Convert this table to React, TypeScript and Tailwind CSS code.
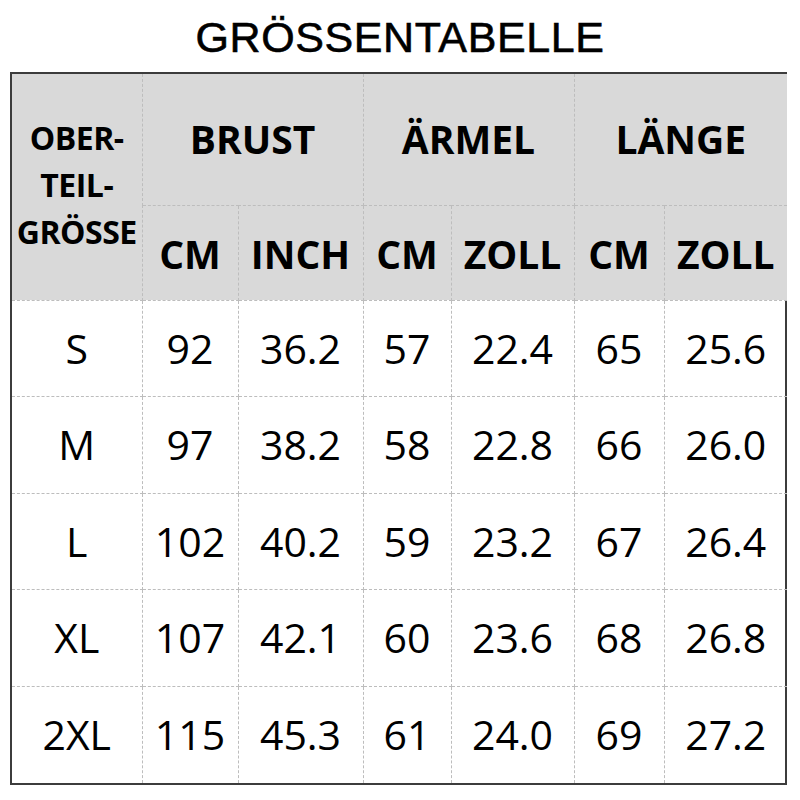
const rows = [
  ['S', '92', '36.2', '57', '22.4', '65', '25.6'],
  ['M', '97', '38.2', '58', '22.8', '66', '26.0'],
  ['L', '102', '40.2', '59', '23.2', '67', '26.4'],
  ['XL', '107', '42.1', '60', '23.6', '68', '26.8'],
  ['2XL', '115', '45.3', '61', '24.0', '69', '27.2'],
];

const widths = [130, 96, 125, 88, 123, 90, 123];

export default function App() {
  const cell = 'border border-dashed border-[#bdbdbd] text-center align-middle p-0';
  return (
    <div className="w-[800px] h-[800px] bg-white text-black">
      <h1 className="h-[72px] flex items-center justify-center text-[43px] font-['Liberation_Sans',Arial,sans-serif] tracking-[0.6px] pt-[2px] [-webkit-text-stroke:0.6px_black]">
        GRÖSSENTABELLE
      </h1>
      <div className="ml-[10px] w-[777px] border-2 border-[#3c3c3c]">
        <table className="w-full table-fixed border-collapse border-hidden font-['Open_Sans',sans-serif]">
          <colgroup>
            {widths.map((w, i) => (
              <col key={i} style={{ width: w }} />
            ))}
          </colgroup>
          <thead className="bg-[#d9d9d9] font-bold">
            <tr className="h-[131px]">
              <th rowSpan={2} className={`${cell} text-[32px] leading-[47px] pb-[4px] tracking-[-0.5px]`}>
                OBER-<br />TEIL-<br />GRÖSSE
              </th>
              <th colSpan={2} className={`${cell} text-[39px]`}>BRUST</th>
              <th colSpan={2} className={`${cell} text-[39px]`}>ÄRMEL</th>
              <th colSpan={2} className={`${cell} text-[39px]`}>LÄNGE</th>
            </tr>
            <tr className="h-[95px]">
              {['CM', 'INCH', 'CM', 'ZOLL', 'CM', 'ZOLL'].map((h, i) => (
                <th key={i} className={`${cell} text-[39px] pt-[4px]`}>{h}</th>
              ))}
            </tr>
          </thead>
          <tbody>
            {rows.map((r) => (
              <tr key={r[0]} className="h-[96.6px]">
                {r.map((v, i) => (
                  <td key={i} className={`${cell} text-[41px]`}>{v}</td>
                ))}
              </tr>
            ))}
          </tbody>
        </table>
      </div>
    </div>
  );
}
